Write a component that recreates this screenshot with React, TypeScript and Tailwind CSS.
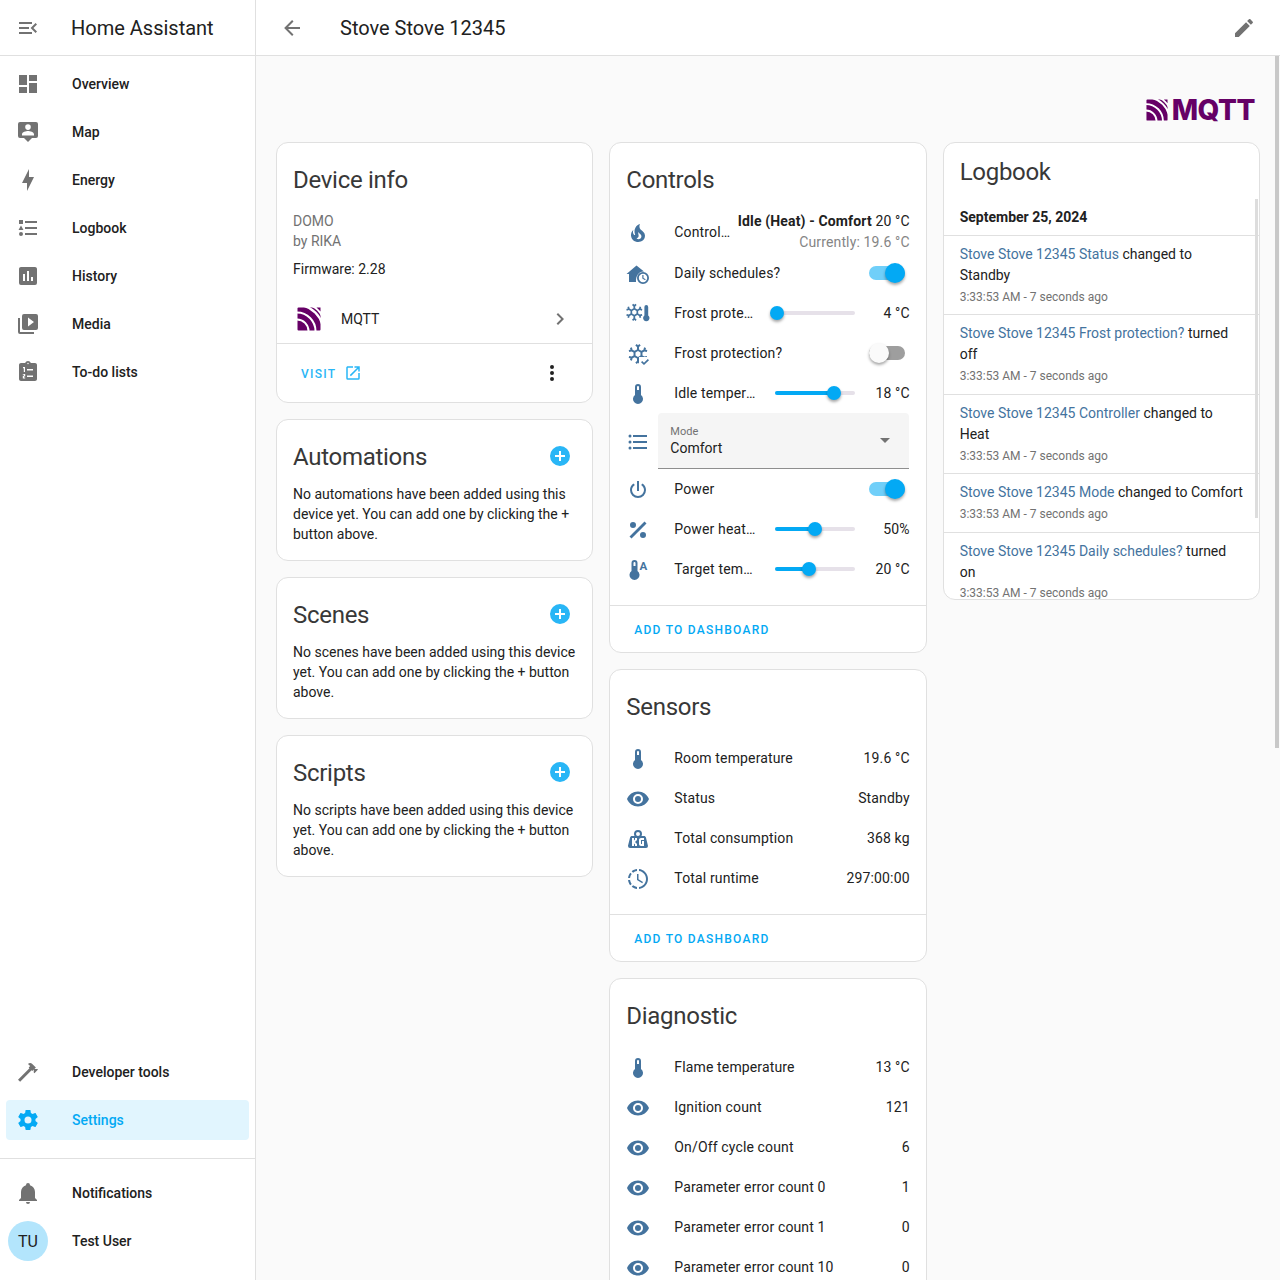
import React from "react";

const P = {
  menu: "M21,15.61L19.59,17L14.58,12L19.59,7L21,8.39L17.44,12L21,15.61M3,6H16V8H3V6M3,13V11H13V13H3M3,18V16H16V18H3Z",
  dash: "M13,3V9H21V3M13,21H21V11H13M3,21H11V15H3M3,13H11V3H3V13Z",
  map: "M4 2H20A2 2 0 0 1 22 4V16A2 2 0 0 1 20 18H16L12 22L8 18H4A2 2 0 0 1 2 16V4A2 2 0 0 1 4 2ZM12 4.3A2.8 2.8 0 1 0 12 9.9A2.8 2.8 0 1 0 12 4.3ZM18 15.5V14.2C18 12.2 14 11 12 11S6 12.2 6 14.2V15.5H18Z",
  bolt: "M11 15H6L13 1V9H18L11 23V15Z",
  log: "M5,9.5L7.5,14H2.5L5,9.5M3,4H7V8H3V4M5,20A2,2 0 0,0 7,18A2,2 0 0,0 5,16A2,2 0 0,0 3,18A2,2 0 0,0 5,20M9,5V7H21V5H9M9,19H21V17H9V19M9,13H21V11H9V13Z",
  chart: "M9 17H7V10H9V17M13 17H11V7H13V17M17 17H15V13H17V17M19 3H5C3.89 3 3 3.89 3 5V19A2 2 0 0 0 5 21H19A2 2 0 0 0 21 19V5C21 3.89 20.1 3 19 3Z",
  media: "M4,6H2V20A2,2 0 0,0 4,22H18V20H4V6M20,2H8A2,2 0 0,0 6,4V16A2,2 0 0,0 8,18H20A2,2 0 0,0 22,16V4A2,2 0 0,0 20,2M12,14.5V5.5L18,10L12,14.5Z",
  todo: "M19 3H14.82C14.4 1.84 13.3 1 12 1S9.6 1.84 9.18 3H5C3.9 3 3 3.9 3 5V19C3 20.1 3.9 21 5 21H19C20.1 21 21 20.1 21 19V5C21 3.9 20.1 3 19 3ZM7 7H9V12H7.8V8.2H7ZM6.8 14H9.2V16.6H8V17.6H9.2V18.4H6.8V15.8H8V14.8H6.8ZM11 9H17V10.5H11ZM11 15.5H17V17H11ZM12 2.75C12.41 2.75 12.75 3.09 12.75 3.5S12.41 4.25 12 4.25 11.25 3.91 11.25 3.5 11.59 2.75 12 2.75Z",
  hammer: "M2 19.63L13.43 8.2L12.72 7.5L14.14 6.07L12 3.89C13.2 2.7 15.09 2.7 16.27 3.89L19.87 7.5L18.45 8.91H21.29L22 9.62L18.45 13.21L17.74 12.5V9.62L16.27 11.04L15.56 10.33L4.13 21.76L2 19.63Z",
  cog: "M12,15.5A3.5,3.5 0 0,1 8.5,12A3.5,3.5 0 0,1 12,8.5A3.5,3.5 0 0,1 15.5,12A3.5,3.5 0 0,1 12,15.5M19.43,12.97C19.47,12.65 19.5,12.33 19.5,12C19.5,11.67 19.47,11.34 19.43,11L21.54,9.37C21.73,9.22 21.78,8.95 21.66,8.73L19.66,5.27C19.54,5.05 19.27,4.96 19.05,5.05L16.56,6.05C16.04,5.66 15.5,5.32 14.87,5.07L14.5,2.42C14.46,2.18 14.25,2 14,2H10C9.75,2 9.54,2.18 9.5,2.42L9.13,5.07C8.5,5.32 7.96,5.66 7.44,6.05L4.95,5.05C4.73,4.96 4.46,5.05 4.34,5.27L2.34,8.73C2.21,8.95 2.27,9.22 2.46,9.37L4.57,11C4.53,11.34 4.5,11.67 4.5,12C4.5,12.33 4.53,12.65 4.57,12.97L2.46,14.63C2.27,14.78 2.21,15.05 2.34,15.27L4.34,18.73C4.46,18.95 4.73,19.03 4.95,18.95L7.44,17.94C7.96,18.34 8.5,18.68 9.13,18.93L9.5,21.58C9.54,21.82 9.75,22 10,22H14C14.25,22 14.46,21.82 14.5,21.58L14.87,18.93C15.5,18.67 16.04,18.34 16.56,17.94L19.05,18.95C19.27,19.03 19.54,18.95 19.66,18.73L21.66,15.27C21.78,15.05 21.73,14.78 21.54,14.63L19.43,12.97Z",
  bell: "M21,19V20H3V19L5,17V11C5,7.9 7.03,5.17 10,4.29C10,4.19 10,4.1 10,4A2,2 0 0,1 12,2A2,2 0 0,1 14,4C14,4.1 14,4.19 14,4.29C16.97,5.17 19,7.9 19,11V17L21,19M14,21A2,2 0 0,1 12,23A2,2 0 0,1 10,21",
  back: "M20,11V13H8L13.5,18.5L12.08,19.92L4.16,12L12.08,4.08L13.5,5.5L8,11H20Z",
  pencil: "M20.71,7.04C21.1,6.65 21.1,6 20.71,5.63L18.37,3.29C18,2.9 17.35,2.9 16.96,3.29L15.12,5.12L18.87,8.87M3,17.25V21H6.75L17.81,9.93L14.06,6.18L3,17.25Z",
  chevron: "M8.59,16.58L13.17,12L8.59,7.41L10,6L16,12L10,18L8.59,16.58Z",
  dots: "M12,16A2,2 0 0,1 14,18A2,2 0 0,1 12,20A2,2 0 0,1 10,18A2,2 0 0,1 12,16M12,10A2,2 0 0,1 14,12A2,2 0 0,1 12,14A2,2 0 0,1 10,12A2,2 0 0,1 12,10M12,4A2,2 0 0,1 14,6A2,2 0 0,1 12,8A2,2 0 0,1 10,6A2,2 0 0,1 12,4Z",
  open: "M14,3V5H17.59L7.76,14.83L9.17,16.24L19,6.41V10H21V3M19,19H5V5H12V3H5C3.89,3 3,3.9 3,5V19A2,2 0 0,0 5,21H19A2,2 0 0,0 21,19V12H19V19Z",
  plus: "M17,13H13V17H11V13H7V11H11V7H13V11H17M12,2A10,10 0 0,0 2,12A10,10 0 0,0 12,22A10,10 0 0,0 22,12A10,10 0 0,0 12,2Z",
  fire: "M17.66 11.2C17.43 10.9 17.15 10.64 16.89 10.38C16.22 9.78 15.46 9.35 14.82 8.72C13.33 7.26 13 4.85 13.95 3C13 3.23 12.17 3.75 11.46 4.32C8.87 6.4 7.85 10.07 9.07 13.22C9.11 13.32 9.15 13.42 9.15 13.55C9.15 13.77 9 13.97 8.8 14.05C8.57 14.15 8.33 14.09 8.14 13.93C8.08 13.88 8.04 13.83 8 13.76C6.87 12.33 6.69 10.28 7.45 8.64C5.78 10 4.87 12.3 5 14.47C5.06 14.97 5.12 15.47 5.29 15.97C5.43 16.57 5.7 17.17 6 17.7C7.08 19.43 8.95 20.67 10.96 20.92C13.1 21.19 15.39 20.8 17.03 19.32C18.86 17.66 19.5 15 18.56 12.72L18.43 12.46C18.22 12 17.66 11.2 17.66 11.2M14.5 17.5C14.22 17.74 13.76 18 13.4 18.1C12.28 18.5 11.16 17.94 10.5 17.28C11.69 17 12.4 16.12 12.61 15.23C12.78 14.43 12.46 13.77 12.33 13C12.21 12.26 12.23 11.63 12.5 10.94C12.69 11.32 12.89 11.7 13.13 12C13.9 13 15.11 13.44 15.37 14.8C15.41 14.94 15.43 15.08 15.43 15.23C15.46 16.05 15.1 16.95 14.5 17.5H14.5Z",
  therm: "M15 13V5A3 3 0 0 0 9 5V13A5 5 0 1 0 15 13M12 4A1 1 0 0 1 13 5V8H11V5A1 1 0 0 1 12 4Z",
  list: "M7,5H21V7H7V5M7,13V11H21V13H7M4,4.5A1.5,1.5 0 0,1 5.5,6A1.5,1.5 0 0,1 4,7.5A1.5,1.5 0 0,1 2.5,6A1.5,1.5 0 0,1 4,4.5M4,10.5A1.5,1.5 0 0,1 5.5,12A1.5,1.5 0 0,1 4,13.5A1.5,1.5 0 0,1 2.5,12A1.5,1.5 0 0,1 4,10.5M7,19V17H21V19H7M4,16.5A1.5,1.5 0 0,1 5.5,18A1.5,1.5 0 0,1 4,19.5A1.5,1.5 0 0,1 2.5,18A1.5,1.5 0 0,1 4,16.5Z",
  power: "M16.56,5.44L15.11,6.89C16.84,7.94 18,9.83 18,12A6,6 0 0,1 12,18A6,6 0 0,1 6,12C6,9.83 7.16,7.94 8.88,6.88L7.44,5.44C5.36,6.88 4,9.28 4,12A8,8 0 0,0 12,20A8,8 0 0,0 20,12C20,9.28 18.64,6.88 16.56,5.44M13,3H11V13H13",
  percent: "M18.5,3.5L3.5,18.5L5.5,20.5L20.5,5.5M7,4A3,3 0 0,0 4,7A3,3 0 0,0 7,10A3,3 0 0,0 10,7A3,3 0 0,0 7,4M17,14A3,3 0 0,0 14,17A3,3 0 0,0 17,20A3,3 0 0,0 20,17A3,3 0 0,0 17,14Z",
  kg: "M12,3A4,4 0 0,1 16,7C16,7.73 15.81,8.41 15.46,9H18C18.95,9 19.75,9.67 19.95,10.56C21.96,18.57 22,18.78 22,19A2,2 0 0,1 20,21H4A2,2 0 0,1 2,19C2,18.78 2.04,18.57 4.05,10.56C4.25,9.67 5.05,9 6,9H8.54C8.19,8.41 8,7.73 8,7A4,4 0 0,1 12,3M12,5A2,2 0 0,0 10,7A2,2 0 0,0 12,9A2,2 0 0,0 14,7A2,2 0 0,0 12,5M6,11V19H8V16.5L9,17.5V19H11V17L9,15L11,13V11H9V12.5L8,13.5V11H6M15,11C13.89,11 13,11.89 13,13V17C13,18.11 13.89,19 15,19H18V14H16V17H15V13H18V11H15Z",
  eye: "M12,9A3,3 0 0,0 9,12A3,3 0 0,0 12,15A3,3 0 0,0 15,12A3,3 0 0,0 12,9M12,17A5,5 0 0,1 7,12A5,5 0 0,1 12,7A5,5 0 0,1 17,12A5,5 0 0,1 12,17M12,4.5C7,4.5 2.73,7.61 1,12C2.73,16.39 7,19.5 12,19.5C17,19.5 21.27,16.39 23,12C21.27,7.61 17,4.5 12,4.5Z",
  clock: "M13,2.03V2.05L13,4.05C17.39,4.59 20.5,8.58 19.96,12.97C19.5,16.61 16.64,19.5 13,19.93V21.93C18.5,21.38 22.5,16.5 21.95,11C21.5,6.25 17.73,2.5 13,2.03M11,2.06C9.05,2.25 7.19,3 5.67,4.26L7.1,5.74C8.22,4.84 9.57,4.26 11,4.06V2.06M4.26,5.67C3,7.19 2.25,9.04 2.05,11H4.05C4.24,9.58 4.8,8.23 5.69,7.1L4.26,5.67M2.06,13C2.26,14.96 3.03,16.81 4.27,18.33L5.69,16.9C4.81,15.77 4.24,14.42 4.06,13H2.06M7.1,18.37L5.67,19.74C7.18,21 9.04,21.79 11,22V20C9.58,19.82 8.23,19.25 7.1,18.37M12.5,7V12.25L17,14.92L16.25,16.15L11,13V7H12.5Z",
  snow: "M20.79,13.95L18.46,14.57L16.46,13.44V10.56L18.46,9.43L20.79,10.05L21.31,8.12L19.54,7.65L20,5.88L18.07,5.36L17.45,7.69L15.45,8.82L13,7.38V5.12L14.71,3.41L13.29,2L12,3.29L10.71,2L9.29,3.41L11,5.12V7.38L8.5,8.81L6.5,7.69L5.92,5.36L4,5.88L4.47,7.65L2.7,8.12L3.22,10.05L5.55,9.43L7.55,10.56V13.45L5.55,14.58L3.22,13.96L2.7,15.89L4.47,16.36L4,18.12L5.93,18.64L6.55,16.31L8.55,15.18L11,16.62V18.88L9.29,20.59L10.71,22L12,20.71L13.29,22L14.7,20.59L13,18.88V16.62L15.5,15.17L17.5,16.3L18.12,18.63L20,18.12L19.53,16.35L21.3,15.88L20.79,13.95M9.5,10.56L12,9.11L14.5,10.56V13.44L12,14.89L9.5,13.44V10.56Z",
};

function Icon({ d, className = "", size = 24 }: { d: string; className?: string; size?: number }) {
  return (
    <svg width={size} height={size} viewBox="0 0 24 24" fill="currentColor" fillRule="evenodd" className={"shrink-0 " + className}>
      <path d={d} />
    </svg>
  );
}

function HomeClock() {
  return (
    <svg width={24} height={24} viewBox="0 0 24 24" fill="currentColor" className="shrink-0">
      <path d="M10 20H3V12H0.5L10.5 3.5L18 9.6C13.5 9 9.5 13.5 10 20Z" />
      <path fillRule="evenodd" d="M17 10A6 6 0 1 0 17 22A6 6 0 1 0 17 10ZM17 11.8A4.2 4.2 0 1 1 17 20.2A4.2 4.2 0 1 1 17 11.8ZM16.3 13V16.6L19.1 18.2L19.7 17.2L17.5 15.9V13Z" />
    </svg>
  );
}

function SnowTherm() {
  return (
    <svg width={24} height={24} viewBox="0 0 24 24" fill="currentColor" className="shrink-0">
      <g transform="translate(-2 0) scale(0.86)"><path fillRule="evenodd" d={P.snow} /></g>
      <path d="M22.2 13.5V5A1.9 1.9 0 0 0 18.4 5V13.5A3.2 3.2 0 1 0 22.2 13.5Z" />
    </svg>
  );
}

function SnowCheck() {
  return (
    <svg width={24} height={24} viewBox="0 0 24 24" fill="currentColor" className="shrink-0">
      <path fillRule="evenodd" d={P.snow} />
      <path d="M13 15H24V24H13Z" fill="#ffffff" />
      <path d="M15 20.2L16.2 19L18 20.7L21.8 17L23 18.2L18 23Z" />
    </svg>
  );
}

function ThermAuto() {
  return (
    <svg width={24} height={24} viewBox="0 0 24 24" fill="currentColor" className="shrink-0">
      <g transform="translate(-3.5 0)"><path fillRule="evenodd" d={P.therm} /></g>
      <text x="13.5" y="12" fontSize="11.5" fontWeight="700" fontFamily="Roboto, sans-serif">A</text>
    </svg>
  );
}

function MqttMark({ size }: { size: number }) {
  return (
    <svg width={size} height={size} viewBox="0 0 24 24" className="shrink-0">
      <rect x="0.5" y="0.5" width="23" height="23" rx="1" fill="#660066" />
      <circle cx="0" cy="24" r="11.5" fill="none" stroke="#ffffff" strokeWidth="2" />
      <circle cx="0" cy="24" r="18.5" fill="none" stroke="#ffffff" strokeWidth="2" />
      <circle cx="0" cy="24" r="26" fill="none" stroke="#ffffff" strokeWidth="2.2" />
      <path d="M15 0H24V9C22 5 19 2 15 0Z" fill="#ffffff" />
      <path d="M19.5 0.5H23.5V4.5C22.3 3 21 1.7 19.5 0.5Z" fill="#660066" />
    </svg>
  );
}

const navTop: [string, string][] = [
  ["Overview", P.dash], ["Map", P.map], ["Energy", P.bolt], ["Logbook", P.log],
  ["History", P.chart], ["Media", P.media], ["To-do lists", P.todo],
];

function NavRow({ icon, label, active }: { icon: string; label: string; active?: boolean }) {
  return (
    <div className={"mx-[6px] h-10 mb-2 flex items-center rounded-[4px] pl-[10px] " + (active ? "bg-[#e1f5fe] text-[#03a9f4]" : "text-[#212121]")}>
      <Icon d={icon} className={active ? "text-[#03a9f4]" : "text-[#727272]"} />
      <span className="ml-8 text-[14px] font-medium leading-5">{label}</span>
    </div>
  );
}

function Sidebar() {
  return (
    <aside className="w-[256px] shrink-0 h-full border-r border-[#e0e0e0] bg-white flex flex-col">
      <div className="h-14 shrink-0 border-b border-[#e0e0e0] flex items-center pl-4">
        <Icon d={P.menu} className="text-[#727272]" />
        <span className="ml-[31px] text-[20px] text-[#212121] leading-7">Home Assistant</span>
      </div>
      <nav className="flex-1 pt-2">
        {navTop.map(([l, i]) => <NavRow key={l} label={l} icon={i} />)}
      </nav>
      <div className="shrink-0">
        <NavRow icon={P.hammer} label="Developer tools" />
        <NavRow icon={P.cog} label="Settings" active />
        <div className="border-t border-[#e0e0e0] mt-[18px] pt-[14px] pb-[19px]">
          <div className="h-10 mb-2 flex items-center pl-4">
            <Icon d={P.bell} className="text-[#727272]" />
            <span className="ml-8 text-[14px] font-medium text-[#212121]">Notifications</span>
          </div>
          <div className="h-10 flex items-center pl-2">
            <div className="size-10 pt-[1px] rounded-full bg-[#b3e5fc] flex items-center justify-center text-[16px] text-[#212121]">TU</div>
            <span className="ml-6 text-[14px] font-medium text-[#212121]">Test User</span>
          </div>
        </div>
      </div>
    </aside>
  );
}

function Card({ children, className = "" }: { children: React.ReactNode; className?: string }) {
  return <div className={"bg-white border border-[#e0e0e0] rounded-xl overflow-hidden " + className}>{children}</div>;
}

function Title({ children, right }: { children: React.ReactNode; right?: React.ReactNode }) {
  return (
    <div className="h-[48px] mt-[13px] px-4 flex items-center justify-between text-[24px] tracking-[-0.012em] text-[#383838] font-normal">
      <span>{children}</span>
      {right}
    </div>
  );
}

function EmptyCard({ title, text }: { title: string; text: string }) {
  return (
    <Card>
      <Title right={<Icon d={P.plus} className="text-[#29b6f6] mr-1 -mt-[2px]" />}>{title}</Title>
      <p className="px-4 pb-[16px] mt-[3px] text-[14px] leading-5 text-[#212121]">{text}</p>
    </Card>
  );
}

function DeviceInfo() {
  return (
    <Card>
      <Title>Device info</Title>
      <div className="px-4 pt-[7px] text-[14px] leading-5 text-[#727272]">
        <div>DOMO</div>
        <div>by RIKA</div>
        <div className="mt-2 text-[#212121]">Firmware: 2.28</div>
      </div>
      <div className="mt-4 h-[48px] flex items-center pl-5 pr-5">
        <MqttMark size={24} />
        <span className="ml-5 flex-1 text-[14px] text-[#212121]">MQTT</span>
        <Icon d={P.chevron} className="text-[#727272]" />
      </div>
      <div className="border-t border-[#e0e0e0] h-[59px] flex items-center pl-6 pr-7 justify-between">
        <div className="flex items-center text-[#29b6f6]">
          <span className="pt-[1px] text-[12px] font-medium tracking-[1.25px]">VISIT</span>
          <Icon d={P.open} size={18} className="ml-[8px]" />
        </div>
        <Icon d={P.dots} className="text-[#212121]" />
      </div>
    </Card>
  );
}

function Row({ icon, label, children, h = "h-10" }: { icon: React.ReactNode; label: string; children?: React.ReactNode; h?: string }) {
  return (
    <div className={"flex items-center text-[14px] tracking-[0.14px] text-[#212121] " + h}>
      <div className="w-6 pt-[2px] shrink-0 text-[#44739e]">{icon}</div>
      <div className="ml-6 flex-1 min-w-0 truncate">{label}</div>
      {children}
    </div>
  );
}

function Switch({ on }: { on: boolean }) {
  return (
    <div className={"relative w-9 h-[14px] mr-[5px] rounded-full shrink-0 " + (on ? "bg-[#70cff9]" : "bg-[#9e9e9e]")}>
      <div
        className={"absolute -top-[3px] size-5 rounded-full shadow-[0_2px_3px_rgba(0,0,0,0.35)] " + (on ? "right-0 bg-[#03a9f4]" : "left-0 bg-[#fafafa]")}
      />
    </div>
  );
}

function Slider({ at, value }: { at: number; value: string }) {
  return (
    <>
      <div className="relative w-20 h-1 ml-[18px] rounded-full bg-[#e6e1e9] shrink-0">
        <div className="absolute left-0 top-0 h-1 rounded-full bg-[#03a9f4]" style={{ width: at }} />
        <div className="absolute -top-[5px] -ml-[7px] size-[14px] rounded-full bg-[#03a9f4] shadow-[0_2px_3px_rgba(0,0,0,0.35)]" style={{ left: at }} />
      </div>
      <div className="w-[55px] text-right shrink-0">{value}</div>
    </>
  );
}

function AddToDashboard() {
  return (
    <div className="mt-4 border-t border-[#e0e0e0] h-[47px] pt-[2px] flex items-center pl-6">
      <span className="text-[12px] font-medium tracking-[1.25px] text-[#03a9f4]">ADD TO DASHBOARD</span>
    </div>
  );
}

function Controls() {
  return (
    <Card>
      <Title>Controls</Title>
      <div className="px-4 pt-[7px]">
        <div className="flex items-center text-[14px] tracking-[0.14px] text-[#212121] h-[42px]">
          <div className="w-6 pt-[2px] shrink-0 text-[#44739e]"><Icon d={P.fire} /></div>
          <div className="ml-6 w-[56px] shrink-0 truncate">Controller</div>
          <div className="flex-1 text-right leading-[21px] min-w-0">
            <div className="whitespace-nowrap"><b className="font-bold">Idle (Heat) - Comfort</b> 20 °C</div>
            <div className="text-[#858585]">Currently: 19.6 °C</div>
          </div>
        </div>
        <Row icon={<HomeClock />} label="Daily schedules?"><Switch on /></Row>
        <Row icon={<SnowTherm />} label="Frost protection temperature"><Slider at={2} value="4 °C" /></Row>
        <Row icon={<SnowCheck />} label="Frost protection?"><Switch on={false} /></Row>
        <Row icon={<Icon d={P.therm} />} label="Idle temperature"><Slider at={59} value="18 °C" /></Row>
        <div className="flex items-center h-[56px]">
          <div className="w-6 pt-[2px] shrink-0 text-[#44739e]"><Icon d={P.list} /></div>
          <div className="ml-2 mr-[1px] flex-1 h-[56px] bg-[#f5f5f5] rounded-t-[4px] border-b border-[#8e8e8e] pl-3 pr-[19px] flex items-center justify-between">
            <div>
              <div className="pt-[2px] text-[11px] leading-[14px] text-[#727272]">Mode</div>
              <div className="text-[14px] leading-5 text-[#212121] -mt-[1px]">Comfort</div>
            </div>
            <div className="w-0 h-0 border-x-[5px] border-x-transparent border-t-[5px] border-t-[#727272]" />
          </div>
        </div>
        <Row icon={<Icon d={P.power} />} label="Power"><Switch on /></Row>
        <Row icon={<Icon d={P.percent} />} label="Power heating"><Slider at={40} value="50%" /></Row>
        <Row icon={<ThermAuto />} label="Target temperature"><Slider at={34} value="20 °C" /></Row>
      </div>
      <AddToDashboard />
    </Card>
  );
}

function ValueRow({ icon, label, value }: { icon: React.ReactNode; label: string; value: string }) {
  return <Row icon={icon} label={label}><div className="shrink-0">{value}</div></Row>;
}

const therm = <Icon d={P.therm} />;
const eye = <Icon d={P.eye} />;

function Sensors() {
  return (
    <Card>
      <Title>Sensors</Title>
      <div className="px-4 pt-[7px]">
        <ValueRow icon={therm} label="Room temperature" value="19.6 °C" />
        <ValueRow icon={eye} label="Status" value="Standby" />
        <ValueRow icon={<Icon d={P.kg} />} label="Total consumption" value="368 kg" />
        <ValueRow icon={<Icon d={P.clock} />} label="Total runtime" value="297:00:00" />
      </div>
      <AddToDashboard />
    </Card>
  );
}

function Diagnostic() {
  return (
    <Card>
      <Title>Diagnostic</Title>
      <div className="px-4 pt-[7px] pb-10">
        <ValueRow icon={therm} label="Flame temperature" value="13 °C" />
        <ValueRow icon={eye} label="Ignition count" value="121" />
        <ValueRow icon={eye} label="On/Off cycle count" value="6" />
        <ValueRow icon={eye} label="Parameter error count 0" value="1" />
        <ValueRow icon={eye} label="Parameter error count 1" value="0" />
        <ValueRow icon={eye} label="Parameter error count 10" value="0" />
      </div>
    </Card>
  );
}

const logs: [string, string, string, string][] = [
  ["Stove Stove 12345 Status", "changed to Standby", "h-[79px]", "mt-[1px]"],
  ["Stove Stove 12345 Frost protection?", "turned off", "h-[80px]", "mt-[1px]"],
  ["Stove Stove 12345 Controller", "changed to Heat", "h-[79px]", "mt-[1px]"],
  ["Stove Stove 12345 Mode", "changed to Comfort", "h-[59px]", "mt-[1px]"],
  ["Stove Stove 12345 Daily schedules?", "turned on", "h-[80px]", "mt-0"],
];

function Logbook() {
  return (
    <div className="relative">
      <Card className="h-[458px]">
        <div className="h-[56px] pt-[2px] px-4 flex items-center text-[24px] tracking-[-0.012em] text-[#383838]">Logbook</div>
        <div className="h-[37px] px-4 flex items-center text-[14px] font-bold text-[#212121] border-b border-[#e0e0e0]">September 25, 2024</div>
        {logs.map(([a, b, h, m]) => (
          <div key={a} className={"px-4 pt-[8px] text-[14px] leading-[21px] text-[#212121] border-b border-[#e0e0e0] " + h}>
            <div><span className="text-[#44739e]">{a}</span> {b}</div>
            <div className={"text-[12px] text-[#727272] " + m}>3:33:53 AM - 7 seconds ago</div>
          </div>
        ))}
      </Card>
      <div className="absolute right-[2px] top-[57px] w-[3px] h-[319px] bg-[#dddddd]" />
    </div>
  );
}

export default function App() {
  return (
    <div className="h-[1280px] overflow-hidden flex bg-[#fafafa] font-['Roboto',sans-serif]">
      <Sidebar />
      <div className="relative flex-1 min-w-0 flex flex-col">
        <header className="h-14 shrink-0 bg-white border-b border-[#e0e0e0] flex items-center pl-6 pr-6">
          <Icon d={P.back} className="text-[#727272]" />
          <span className="ml-[36px] flex-1 text-[20px] text-[#212121]">Stove Stove 12345</span>
          <Icon d={P.pencil} className="text-[#727272]" />
        </header>
        <div className="flex-1 overflow-hidden px-5">
          <div className="h-[86px] flex items-end justify-end pb-[18px] pr-[5px]">
            <div className="flex items-center text-[#660066]">
              <MqttMark size={22} />
              <span className="ml-[4px] text-[28px] leading-[28px] font-extrabold tracking-[-0.5px] font-['Inter',sans-serif]">MQTT</span>
            </div>
          </div>
          <div className="grid grid-cols-3 gap-4 items-start">
            <div className="flex flex-col gap-4">
              <DeviceInfo />
              <EmptyCard title="Automations" text="No automations have been added using this device yet. You can add one by clicking the + button above." />
              <EmptyCard title="Scenes" text="No scenes have been added using this device yet. You can add one by clicking the + button above." />
              <EmptyCard title="Scripts" text="No scripts have been added using this device yet. You can add one by clicking the + button above." />
            </div>
            <div className="flex flex-col gap-4">
              <Controls />
              <Sensors />
              <Diagnostic />
            </div>
            <Logbook />
          </div>
        </div>
        <div className="absolute right-[1px] top-14 w-1 h-[692px] bg-[#c8c8c8]" />
      </div>
    </div>
  );
}
